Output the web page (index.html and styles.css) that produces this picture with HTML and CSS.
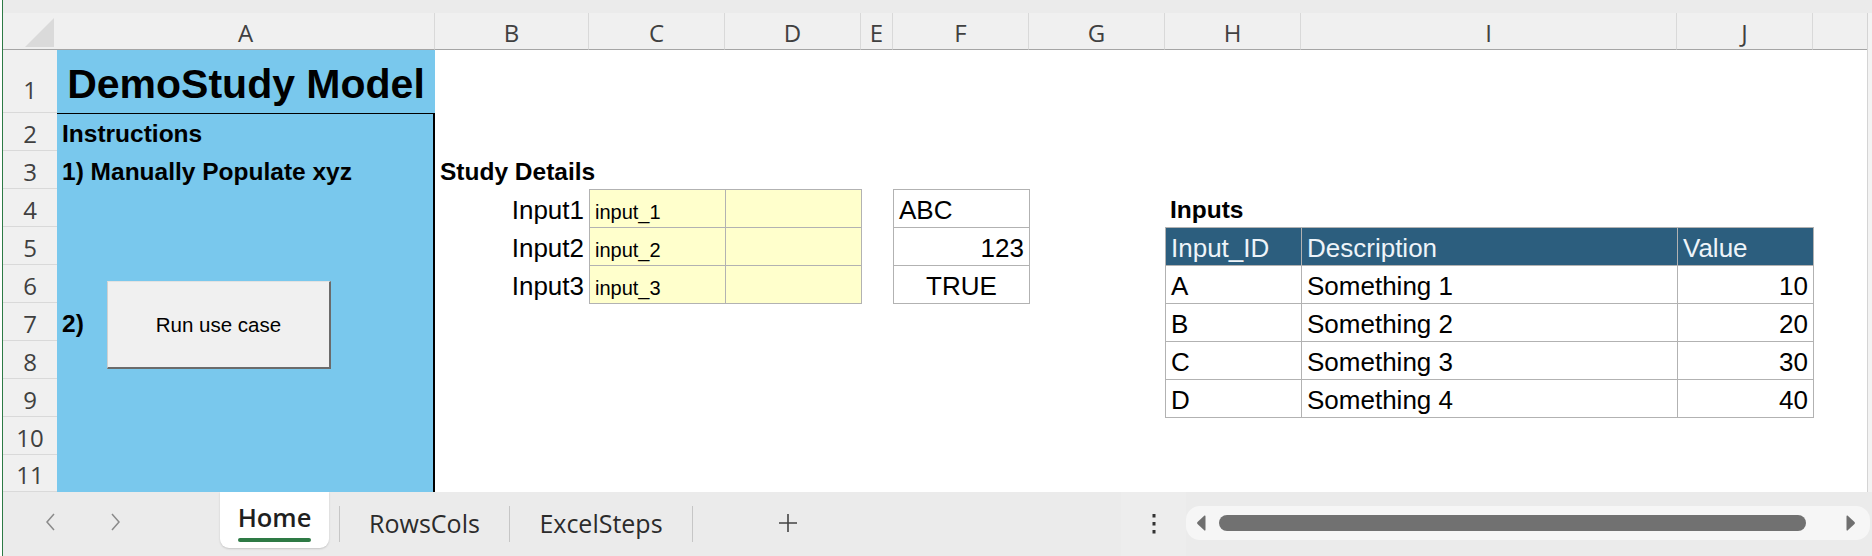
FILE: index.html
```html
<!DOCTYPE html>
<html lang="en">
<head>
<meta charset="utf-8">
<title>DemoStudy Model</title>
<link rel="stylesheet" href="styles.css">
</head>
<body>
<div class="app">
  <div class="edge"></div>
  <div class="main">
    <div class="topstrip"></div>
    <div class="sheetwrap">
      <div class="sheet">
        <div class="corner"><div class="corner-tri"></div></div>
        <div class="colhead">A</div>
        <div class="colhead">B</div>
        <div class="colhead">C</div>
        <div class="colhead">D</div>
        <div class="colhead">E</div>
        <div class="colhead">F</div>
        <div class="colhead">G</div>
        <div class="colhead">H</div>
        <div class="colhead">I</div>
        <div class="colhead">J</div>
        <div class="colhead last"></div>

        <div class="rowhead rowhead-first row-1">1</div>
        <div class="rowhead row-2">2</div>
        <div class="rowhead row-3">3</div>
        <div class="rowhead row-4">4</div>
        <div class="rowhead row-5">5</div>
        <div class="rowhead row-6">6</div>
        <div class="rowhead row-7">7</div>
        <div class="rowhead row-8">8</div>
        <div class="rowhead row-9">9</div>
        <div class="rowhead row-10">10</div>
        <div class="rowhead row-11">11</div>

        <div class="title">DemoStudy Model</div>
        <div class="panel">
          <div class="macro-btn">Run use case</div>
        </div>
        <div class="cell bold col-a row-2">Instructions</div>
        <div class="cell bold col-a row-3">1) Manually Populate xyz</div>
        <div class="cell bold col-a row-7">2)</div>

        <div class="cell bold col-b row-3">Study Details</div>
        <div class="cell right col-b row-4">Input1</div>
        <div class="cell right col-b row-5">Input2</div>
        <div class="cell right col-b row-6">Input3</div>

        <div class="box yellow">
          <div class="cell small">input_1</div>
          <div class="cell small"></div>
          <div class="cell small">input_2</div>
          <div class="cell small"></div>
          <div class="cell small">input_3</div>
          <div class="cell small"></div>
        </div>

        <div class="box fbox">
          <div class="cell">ABC</div>
          <div class="cell right">123</div>
          <div class="cell center">TRUE</div>
        </div>

        <div class="cell bold col-h row-4">Inputs</div>

        <div class="box datatable">
          <div class="cell th">Input_ID</div>
          <div class="cell th">Description</div>
          <div class="cell th">Value</div>
          <div class="cell">A</div>
          <div class="cell">Something 1</div>
          <div class="cell right">10</div>
          <div class="cell">B</div>
          <div class="cell">Something 2</div>
          <div class="cell right">20</div>
          <div class="cell">C</div>
          <div class="cell">Something 3</div>
          <div class="cell right">30</div>
          <div class="cell">D</div>
          <div class="cell">Something 4</div>
          <div class="cell right">40</div>
        </div>
      </div>
      <div class="vstrip"></div>
    </div>

    <div class="tabbar">
      <div class="tabnav">
        <svg class="chev" width="14" height="20" viewBox="0 0 14 20"><polyline points="10,2 3,10 10,18"/></svg>
        <svg class="chev" width="14" height="20" viewBox="0 0 14 20"><polyline points="4,2 11,10 4,18"/></svg>
      </div>
      <div class="tab active"><span class="tab-label">Home</span></div>
      <div class="tabsep"></div>
      <div class="tab tab-rows">RowsCols</div>
      <div class="tabsep"></div>
      <div class="tab tab-steps">ExcelSteps</div>
      <div class="tabsep"></div>
      <div class="addsheet">
        <svg width="20" height="20" viewBox="0 0 20 20"><path d="M10 1V19M1 10H19"/></svg>
      </div>
      <div class="tabbar-right">
        <div class="more">
          <svg width="4" height="22" viewBox="0 0 4 22"><rect x="0.5" y="1" width="3" height="3.5"/><rect x="0.5" y="9" width="3" height="3.5"/><rect x="0.5" y="17" width="3" height="3.5"/></svg>
        </div>
        <div class="hscroll">
          <svg class="sarrow left" width="10" height="18" viewBox="0 0 10 18"><path d="M8.5 1.5 Q9.5 1 9.5 2.5 V15.5 Q9.5 17 8.5 16.5 L1.5 10 Q0.5 9 1.5 8 Z"/></svg>
          <div class="thumb"></div>
          <svg class="sarrow right" width="10" height="18" viewBox="0 0 10 18"><path d="M1.5 1.5 Q0.5 1 0.5 2.5 V15.5 Q0.5 17 1.5 16.5 L8.5 10 Q9.5 9 8.5 8 Z"/></svg>
        </div>
      </div>
    </div>
  </div>
</div>
</body>
</html>
```

FILE: styles.css
```css
* { box-sizing: border-box; }

html, body {
  margin: 0;
  padding: 0;
}

body {
  width: 1872px;
  height: 556px;
  overflow: hidden;
  background: #ebebeb;
  font-family: "Liberation Sans", Arial, sans-serif;
  color: #000;
}

.app {
  display: flex;
  width: 1872px;
  height: 556px;
}

.edge {
  width: 3px;
  flex: none;
  background: #fff;
  border-right: 1px solid #2d7a45;
}

.main {
  flex: 1;
  min-width: 0;
  display: flex;
  flex-direction: column;
}

.topstrip {
  height: 13px;
  flex: none;
  background: #ebebeb;
}

.sheetwrap {
  height: 479px;
  flex: none;
  display: flex;
}

.sheet {
  flex: 1;
  min-width: 0;
  display: grid;
  grid-template-columns: 54px 378px 154px 136px 136px 32px 136px 136px 136px 376px 136px 1fr;
  grid-template-rows: 37px 63px repeat(9, 38px) 1fr;
  background: #fff;
  overflow: hidden;
}

.vstrip {
  width: 5px;
  flex: none;
  background: #f3f3f3;
  border-left: 1px solid #d4d4d4;
}

/* headers */
.corner {
  grid-row: 1;
  grid-column: 1;
  background: #f0f0f0;
  border-bottom: 1px solid #a5a5a5;
  display: flex;
  justify-content: flex-end;
  align-items: flex-end;
  padding: 0 3px 2px 0;
}

.corner-tri {
  width: 29px;
  height: 29px;
  background: #dadada;
  clip-path: polygon(100% 0, 100% 100%, 0 100%);
}

.colhead {
  grid-row: 1;
  background: #f0f0f0;
  border-right: 1px solid #d9d9d9;
  border-bottom: 1px solid #a5a5a5;
  font-family: "Open Sans", "Liberation Sans", sans-serif;
  font-size: 24px;
  line-height: 1;
  color: #404040;
  display: flex;
  align-items: flex-end;
  justify-content: center;
  padding-bottom: 3.6px;
}

.colhead.last { border-right: none; }

.rowhead {
  grid-column: 1;
  background: #f0f0f0;
  border-bottom: 1px solid #d9d9d9;
  font-family: "Open Sans", "Liberation Sans", sans-serif;
  font-size: 24px;
  line-height: 1;
  color: #404040;
  display: flex;
  align-items: flex-end;
  justify-content: center;
  padding-bottom: 4px;
}

.rowhead-first {
  align-items: center;
  padding-top: 17px;
  padding-bottom: 0;
}

/* grid placement */
.row-1 { grid-row: 2; }
.row-2 { grid-row: 3; }
.row-3 { grid-row: 4; }
.row-4 { grid-row: 5; }
.row-5 { grid-row: 6; }
.row-6 { grid-row: 7; }
.row-7 { grid-row: 8; }
.row-8 { grid-row: 9; }
.row-9 { grid-row: 10; }
.row-10 { grid-row: 11; }
.row-11 { grid-row: 12; }

.col-a { grid-column: 2; }
.col-b { grid-column: 3; }
.col-h { grid-column: 9; }

/* blue block */
.title {
  grid-row: 2;
  grid-column: 2;
  background: #79c8ed;
  font-weight: 700;
  font-size: 41px;
  line-height: 1;
  display: flex;
  align-items: flex-end;
  justify-content: center;
  padding-bottom: 7.7px;
  white-space: nowrap;
}

.panel {
  grid-row: 3 / 13;
  grid-column: 2;
  background: #79c8ed;
  border-top: 1px solid #000;
  border-right: 2px solid #000;
  position: relative;
}

.macro-btn {
  position: absolute;
  left: 50px;
  top: 167px;
  width: 224px;
  height: 88px;
  background: #f0f0f0;
  border-top: 1px solid #e2e2e2;
  border-left: 1px solid #d0d0d0;
  border-right: 2px solid #6b6b6b;
  border-bottom: 2px solid #6b6b6b;
  font-size: 20.5px;
  line-height: 1;
  display: flex;
  align-items: center;
  justify-content: center;
  padding-top: 2px;
  white-space: nowrap;
}

/* cells */
.cell {
  position: relative;
  display: flex;
  align-items: flex-end;
  line-height: 1;
  font-size: 26px;
  padding: 0 5px 3.8px 5px;
  white-space: nowrap;
}

.cell.bold {
  font-weight: 700;
  font-size: 24.5px;
  padding-bottom: 4.3px;
}

.cell.right { justify-content: flex-end; }
.cell.center { justify-content: center; }

.cell.small {
  font-size: 20px;
  padding-bottom: 5px;
}

/* bordered ranges */
.box {
  display: grid;
  gap: 1px;
  padding: 1px;
  background: #b2b2b2;
  margin: 0 -1px -1px 0;
}

.box > .cell { background: #fff; }

.yellow {
  grid-column: 4 / 6;
  grid-row: 5 / 8;
  grid-template-columns: 1fr 1fr;
  grid-template-rows: repeat(3, 1fr);
}

.yellow > .cell { background: #ffffcc; }

.fbox {
  grid-column: 7;
  grid-row: 5 / 8;
  grid-template-columns: 1fr;
  grid-template-rows: repeat(3, 1fr);
}

.datatable {
  grid-column: 9 / 12;
  grid-row: 6 / 11;
  grid-template-columns: 135px 375px 1fr;
  grid-template-rows: repeat(5, 1fr);
}

.box > .cell.th {
  background: #2c5e7e;
  color: #eef4f9;
}

/* sheet tabs bar */
.tabbar {
  height: 64px;
  flex: none;
  background: #ebebeb;
  display: flex;
  align-items: flex-start;
  font-family: "Open Sans", "Liberation Sans", sans-serif;
}

.tabnav {
  width: 217px;
  height: 60px;
  flex: none;
  display: flex;
  align-items: center;
  padding-left: 41px;
  gap: 50px;
}

.chev polyline {
  fill: none;
  stroke: #8a8a8a;
  stroke-width: 1.5;
}

.tab {
  flex: none;
  height: 56px;
  display: flex;
  justify-content: center;
  font-size: 25px;
  line-height: 1;
  color: #2b2b2b;
  white-space: nowrap;
  padding-top: 18.8px;
}

.tab.active {
  width: 109px;
  margin-right: 10px;
  background: #fff;
  border-radius: 0 0 9px 9px;
  box-shadow: 0 1px 2px rgba(0, 0, 0, 0.16);
  padding-top: 13px;
  color: #1f1f1f;
  font-weight: 600;
  font-size: 25.5px;
}

.tab-label {
  position: relative;
  display: inline-block;
  height: 25px;
}

.tab-label::after {
  content: "";
  position: absolute;
  left: 0;
  right: 0;
  top: 33px;
  height: 4px;
  border-radius: 2px;
  background: #2e7a45;
}

.tab-rows { width: 169px; }
.tab-steps { width: 182px; }

.tabsep {
  width: 1px;
  height: 36px;
  margin-top: 14px;
  flex: none;
  background: #c6c6c6;
}

.addsheet {
  width: 190px;
  height: 62px;
  flex: none;
  display: flex;
  align-items: center;
  justify-content: center;
}

.addsheet path {
  stroke: #444;
  stroke-width: 1.6;
  fill: none;
}

.tabbar-right {
  margin-left: auto;
  margin-right: 2px;
  display: flex;
  align-items: flex-start;
}

.more {
  width: 65px;
  height: 64px;
  background: #ededed;
  display: flex;
  justify-content: center;
  padding-top: 21px;
}

.more rect { fill: #333; }

.hscroll {
  width: 684px;
  height: 34px;
  margin-top: 14px;
  border-radius: 14px;
  background: #f6f6f6;
  display: flex;
  align-items: center;
}

.sarrow { flex: none; }
.sarrow path { fill: #6f6f6f; }
.sarrow.left { margin-left: 10px; }
.sarrow.right { margin-left: 40px; }

.thumb {
  width: 587px;
  height: 16px;
  margin-left: 13px;
  border-radius: 8px;
  background: #717171;
  flex: none;
}
```
